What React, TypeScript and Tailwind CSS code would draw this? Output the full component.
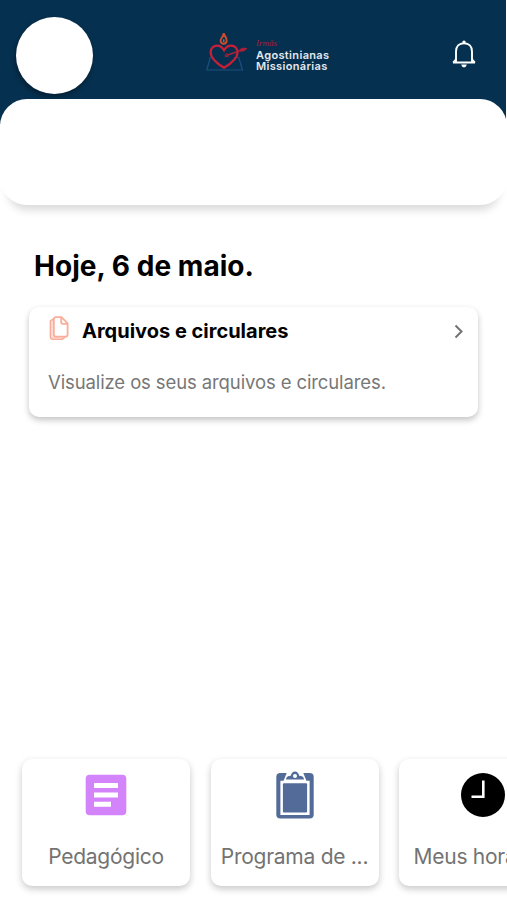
import React from "react";

function Logo() {
  return (
    <svg width="44" height="40" viewBox="0 0 44 40" fill="none" className="shrink-0">
      <path d="M6.5 25.5H4.2L.8 38H36.5L32.8 25.5H30.5" stroke="#1d5080" strokeWidth="1.2" />
      <path
        d="M18 35.8C13 32.8 4.6 27 4.6 20.3C4.6 16.5 7.4 13.6 11 13.6C14.2 13.6 16.4 15.6 18 18.2C19.6 15.6 21.8 13.6 25 13.6C28.8 13.6 31.6 16.5 31.6 20.3C31.6 27 23 32.8 18 35.8Z"
        stroke="#c91f38"
        strokeWidth="2.3"
      />
      <path d="M20.5 23.5L36 17.8" stroke="#b32038" strokeWidth="1.4" />
      <path d="M33.5 17L38 15.5L41.5 16.3L38.5 19L34.5 20Z" fill="#a92038" />
      <path d="M21 21L18.8 24.1L22.5 24.9" stroke="#a92038" strokeWidth="1" />
      <path
        d="M17.7 1.1C18 3.9 21 5.5 20.7 8.6C20.5 10.6 19.2 11.7 17.6 11.7C15.8 11.7 14.5 10.3 14.6 8.4C14.7 6.3 17.5 4.7 17.7 1.1Z"
        stroke="#d24b2e"
        strokeWidth="1.9"
      />
      <path d="M17.8 7.3V10.1" stroke="#df873e" strokeWidth="1" />
    </svg>
  );
}

function Bell() {
  return (
    <svg width="26" height="30" viewBox="0 0 26 30" fill="none">
      <path
        d="M5 23V12.5C5 7.5 8 4.3 13 4.3S21 7.5 21 12.5V23M2 23.5H24"
        stroke="white"
        strokeWidth="1.9"
      />
      <path d="M5 20L2 23.5M21 20L24 23.5" stroke="white" strokeWidth="1.4" />
      <circle cx="13" cy="3.1" r="1.7" fill="white" />
      <path d="M10.3 25.4H15.7C15.4 27.3 14.6 28.2 13 28.2S10.6 27.3 10.3 25.4Z" fill="white" />
    </svg>
  );
}

function Files() {
  return (
    <svg width="20" height="25" viewBox="0 0 20 25" fill="none" stroke="#f9ad9a" strokeLinejoin="round">
      <path
        d="M7 1.2H12.5L18.6 7.4V18.5Q18.6 20.7 16.4 20.7H7Q4.8 20.7 4.8 18.5V3.4Q4.8 1.2 7 1.2Z"
        strokeWidth="1.8"
      />
      <path d="M12.2 1.5V6Q12.2 7.8 14 7.8H18.6" strokeWidth="1.8" />
      <path d="M4.3 3L1.4 4.8V20.8Q1.4 23.2 3.8 23.2H13.4L16.2 20.9" strokeWidth="1.5" />
      <path d="M3 4.2V21.2Q3.3 21.8 4.3 21.8H14" strokeWidth="1.4" opacity=".5" />
    </svg>
  );
}

function Article() {
  return (
    <svg width="42" height="42" viewBox="0 0 42 42">
      <rect x=".7" y=".7" width="40.6" height="40.6" rx="4" fill="#d484fb" />
      <path d="M9 9H33V14H9ZM9 18.4H33V23.4H9ZM9 27.8H26V32.8H9Z" fill="white" />
    </svg>
  );
}

function Clipboard() {
  return (
    <svg width="38" height="48" viewBox="0 0 38 48">
      <rect x=".3" y="2" width="37.4" height="45.5" rx="4" fill="#536b99" />
      <path d="M11.5 0H26.5L30.5 10H7.5Z" fill="white" />
      <path d="M4.4 9.8H33.6V44H4.4Z" fill="white" />
      <rect x="6.9" y="12.3" width="24.2" height="29.2" rx="1" fill="#536b99" />
      <path
        d="M10 8.6C10 6 11.7 5 14.8 4.7C15.2 2 16.8.4 19 .4S22.8 2 23.2 4.7C26.3 5 28 6 28 8.6Z"
        fill="#536b99"
      />
      <circle cx="19" cy="5" r="2" fill="white" />
    </svg>
  );
}

function Clock() {
  return (
    <svg width="44" height="44" viewBox="0 0 44 44" fill="none">
      <circle cx="22" cy="22" r="22" fill="black" />
      <path d="M22.3 7.5V23.8H10.5" stroke="white" strokeWidth="2.6" />
    </svg>
  );
}

const shortcuts = [
  { label: "Pedagógico", icon: <Article /> },
  { label: "Programa de ...", icon: <Clipboard /> },
  { label: "Meus horários", icon: <Clock /> },
];

export default function App() {
  return (
    <main className="flex h-[900px] w-[507px] flex-col overflow-hidden bg-white font-['Inter','Liberation_Sans',sans-serif]">
      <div className="mr-px h-[124px] shrink-0 bg-[#06304f]">
        <header className="flex h-[99px] pl-4 pr-[29px]">
          <div className="mt-[17px] size-[77px] rounded-full bg-white shadow-[-1px_3px_5px_rgba(0,0,0,0.35)]" />
          <div className="ml-[113px] mt-8 flex">
            <Logo />
            <div className="ml-[6px] whitespace-nowrap pt-[7px]">
              <div className="h-[11px] font-['Liberation_Serif',serif] text-[9px] italic leading-[9px] text-[#aa203a]">Irmãs</div>
              <div className="text-[11px] font-semibold leading-[11px] tracking-[0.35px] text-[#e3e9ef]">
                Agostinianas
                <br />
                Missionárias
              </div>
            </div>
          </div>
          <div className="ml-auto mt-[39px]">
            <Bell />
          </div>
        </header>
      </div>
      <section className="-mt-[25px] h-[106px] shrink-0 rounded-[27px] bg-white shadow-[0_13px_9px_-8px_rgba(0,0,0,0.15)]" />
      <h1 className="ml-[34px] mt-[41px] h-10 text-[28px] font-bold leading-10 tracking-[0.05px] text-black">Hoje, 6 de maio.</h1>
      <section className="ml-[29px] mt-[21px] h-[110px] w-[449px] shrink-0 rounded-[10px] bg-white pl-[19px] pr-[13px] pt-[9px] shadow-[0_3px_6px_rgba(0,0,0,0.24)]">
        <div className="flex h-[30px] items-center">
          <div className="-mt-1.5 ml-px">
            <Files />
          </div>
          <h2 className="ml-[13px] text-[20px] font-bold text-black">Arquivos e circulares</h2>
          <svg className="ml-auto" width="12" height="18" viewBox="0 -1 12 18" fill="none">
            <path d="M2.5 2.5L8.5 8.5L2.5 14.5" stroke="#737373" strokeWidth="2" />
          </svg>
        </div>
        <p className="mt-[22px] text-[18.5px] leading-[28px] tracking-[-0.11px] text-[#777]">Visualize os seus arquivos e circulares.</p>
      </section>
      <nav className="mb-[14px] ml-[22px] mt-auto flex gap-[20.5px]">
        {shortcuts.map(({ label, icon }) => (
          <div
            key={label}
            className="flex h-[127px] w-[168px] shrink-0 flex-col items-center rounded-[10px] bg-white shadow-[0_3px_7px_rgba(0,0,0,0.22)]"
          >
            <div className="mt-3 flex h-12 items-center">{icon}</div>
            <span className="mt-6 whitespace-nowrap text-[21px] leading-[28px] tracking-[-0.27px] text-[#737373]">{label}</span>
          </div>
        ))}
      </nav>
    </main>
  );
}
